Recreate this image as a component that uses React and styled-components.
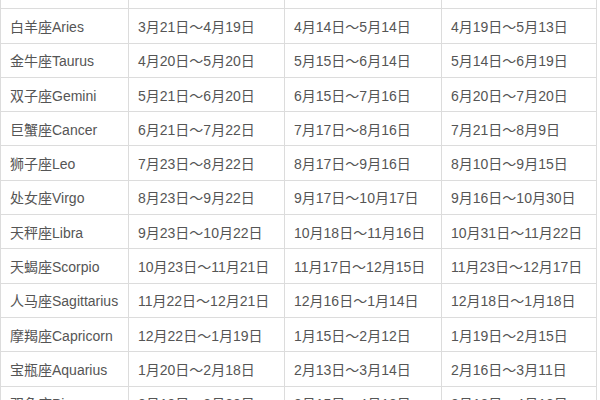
import React from "react";
import styled, { createGlobalStyle } from "styled-components";

const Global = createGlobalStyle`
  html, body { margin: 0; padding: 0; background: #fff; }
  body { width: 600px; height: 400px; overflow: hidden; }
`;

const Table = styled.div`
  display: grid;
  grid-template-columns: 127px 155px 156px 154px;
  grid-auto-rows: 33.3px;
  gap: 1px;
  background: #dcdcdc;
  border: 1px solid #dcdcdc;
  width: max-content;
  margin-top: -26px;
`;

const Cell = styled.div`
  background: #fff;
  display: flex;
  align-items: center;
  padding-left: ${(p) => (p.$first ? "9px" : "9px")};
  font-family: "Liberation Sans", "Noto Sans CJK SC", sans-serif;
  font-size: 14px;
  color: #555;
  white-space: nowrap;
  overflow: hidden;
`;

const header = ["星座", "传统日期", "天文日期", "实际日期"];

const rows = [
  ["白羊座Aries", "3月21日～4月19日", "4月14日～5月14日", "4月19日～5月13日"],
  ["金牛座Taurus", "4月20日～5月20日", "5月15日～6月14日", "5月14日～6月19日"],
  ["双子座Gemini", "5月21日～6月20日", "6月15日～7月16日", "6月20日～7月20日"],
  ["巨蟹座Cancer", "6月21日～7月22日", "7月17日～8月16日", "7月21日～8月9日"],
  ["狮子座Leo", "7月23日～8月22日", "8月17日～9月16日", "8月10日～9月15日"],
  ["处女座Virgo", "8月23日～9月22日", "9月17日～10月17日", "9月16日～10月30日"],
  ["天秤座Libra", "9月23日～10月22日", "10月18日～11月16日", "10月31日～11月22日"],
  ["天蝎座Scorpio", "10月23日～11月21日", "11月17日～12月15日", "11月23日～12月17日"],
  ["人马座Sagittarius", "11月22日～12月21日", "12月16日～1月14日", "12月18日～1月18日"],
  ["摩羯座Capricorn", "12月22日～1月19日", "1月15日～2月12日", "1月19日～2月15日"],
  ["宝瓶座Aquarius", "1月20日～2月18日", "2月13日～3月14日", "2月16日～3月11日"],
  ["双鱼座Pisces", "2月19日～3月20日", "3月15日～4月13日", "3月12日～4月18日"],
];

export default function App() {
  return (
    <>
      <Global />
      <Table>
        {header.map((h, i) => (
          <Cell key={"h" + i} $first={i === 0}>{h}</Cell>
        ))}
        {rows.map((r, ri) =>
          r.map((c, ci) => (
            <Cell key={ri + "-" + ci} $first={ci === 0}>{c}</Cell>
          ))
        )}
      </Table>
    </>
  );
}
